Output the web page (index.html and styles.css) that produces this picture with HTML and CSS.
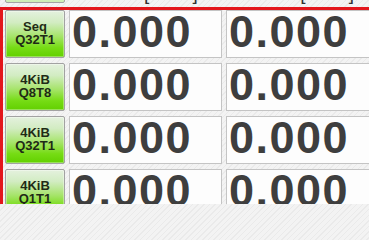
FILE: index.html
```html
<!DOCTYPE html>
<html>
<head>
<meta charset="utf-8">
<link rel="stylesheet" href="styles.css">
</head>
<body>
<div class="app">
  <div class="head">
    <div class="all-btn"></div>
    <div class="col-title">Read [MB/s]</div>
    <div class="col-title">Write [MB/s]</div>
  </div>
  <div class="frame">
    <div class="grid">
      <div class="test-btn">Seq<br>Q32T1</div>
      <div class="cell">0.000</div>
      <div class="cell">0.000</div>
      <div class="test-btn">4KiB<br>Q8T8</div>
      <div class="cell">0.000</div>
      <div class="cell">0.000</div>
      <div class="test-btn">4KiB<br>Q32T1</div>
      <div class="cell">0.000</div>
      <div class="cell">0.000</div>
      <div class="test-btn">4KiB<br>Q1T1</div>
      <div class="cell">0.000</div>
      <div class="cell">0.000</div>
    </div>
  </div>
</div>
</body>
</html>
```

FILE: styles.css
```css
html, body {
  margin: 0;
  padding: 0;
  width: 369px;
  height: 204px;
  overflow: hidden;
}
body {
  background-color: #f3f3f3;
  background-image: repeating-linear-gradient(135deg, rgba(0,0,0,0.035) 0px, rgba(0,0,0,0.035) 1px, transparent 1px, transparent 4px);
  font-family: "Liberation Sans", Arial, sans-serif;
}
.app {
  display: flex;
  flex-direction: column;
  gap: 3px;
}
.head {
  height: 4px;
  overflow: hidden;
  display: grid;
  grid-template-columns: 60px 153px 153px;
  grid-template-rows: 4px;
  column-gap: 4px;
  padding-left: 5px;
  align-items: end;
}
.all-btn {
  height: 30px;
  box-sizing: border-box;
  background: linear-gradient(#e6f3de, #cdeeb5);
  border: 1px solid #a4a4a4;
  border-radius: 2px;
  margin-bottom: 1px;
}
.col-title {
  font-size: 19px;
  line-height: 19px;
  padding-bottom: 1px;
  text-align: center;
  color: #303030;
  white-space: nowrap;
}
.frame {
  border-top: 3px solid #e3161c;
  border-left: 3px solid #e3161c;
  padding-left: 2px;
}
.grid {
  display: grid;
  grid-template-columns: 60px 153px 153px;
  grid-auto-rows: 48px;
  column-gap: 4px;
  row-gap: 5px;
}
.test-btn {
  box-sizing: border-box;
  border: 1px solid #a2a2a2;
  border-radius: 2px;
  background: linear-gradient(#e4f1de 0%, #d2ecc2 25%, #a6e46a 55%, #76dc14 80%, #62d000 100%);
  box-shadow: inset 0 0 0 1px rgba(255,255,255,0.35);
  display: flex;
  align-items: center;
  justify-content: center;
  text-align: center;
  font-weight: bold;
  font-size: 13px;
  line-height: 13px;
  color: #1f2a16;
  padding-bottom: 2px;
}
.cell {
  box-sizing: border-box;
  border: 1px solid #c4c4c4;
  background: #fdfdfd;
  font-weight: bold;
  font-size: 45px;
  line-height: 41px;
  letter-spacing: 1.5px;
  color: #3e3e3e;
  padding-left: 2px;
  white-space: nowrap;
  overflow: hidden;
}
```
